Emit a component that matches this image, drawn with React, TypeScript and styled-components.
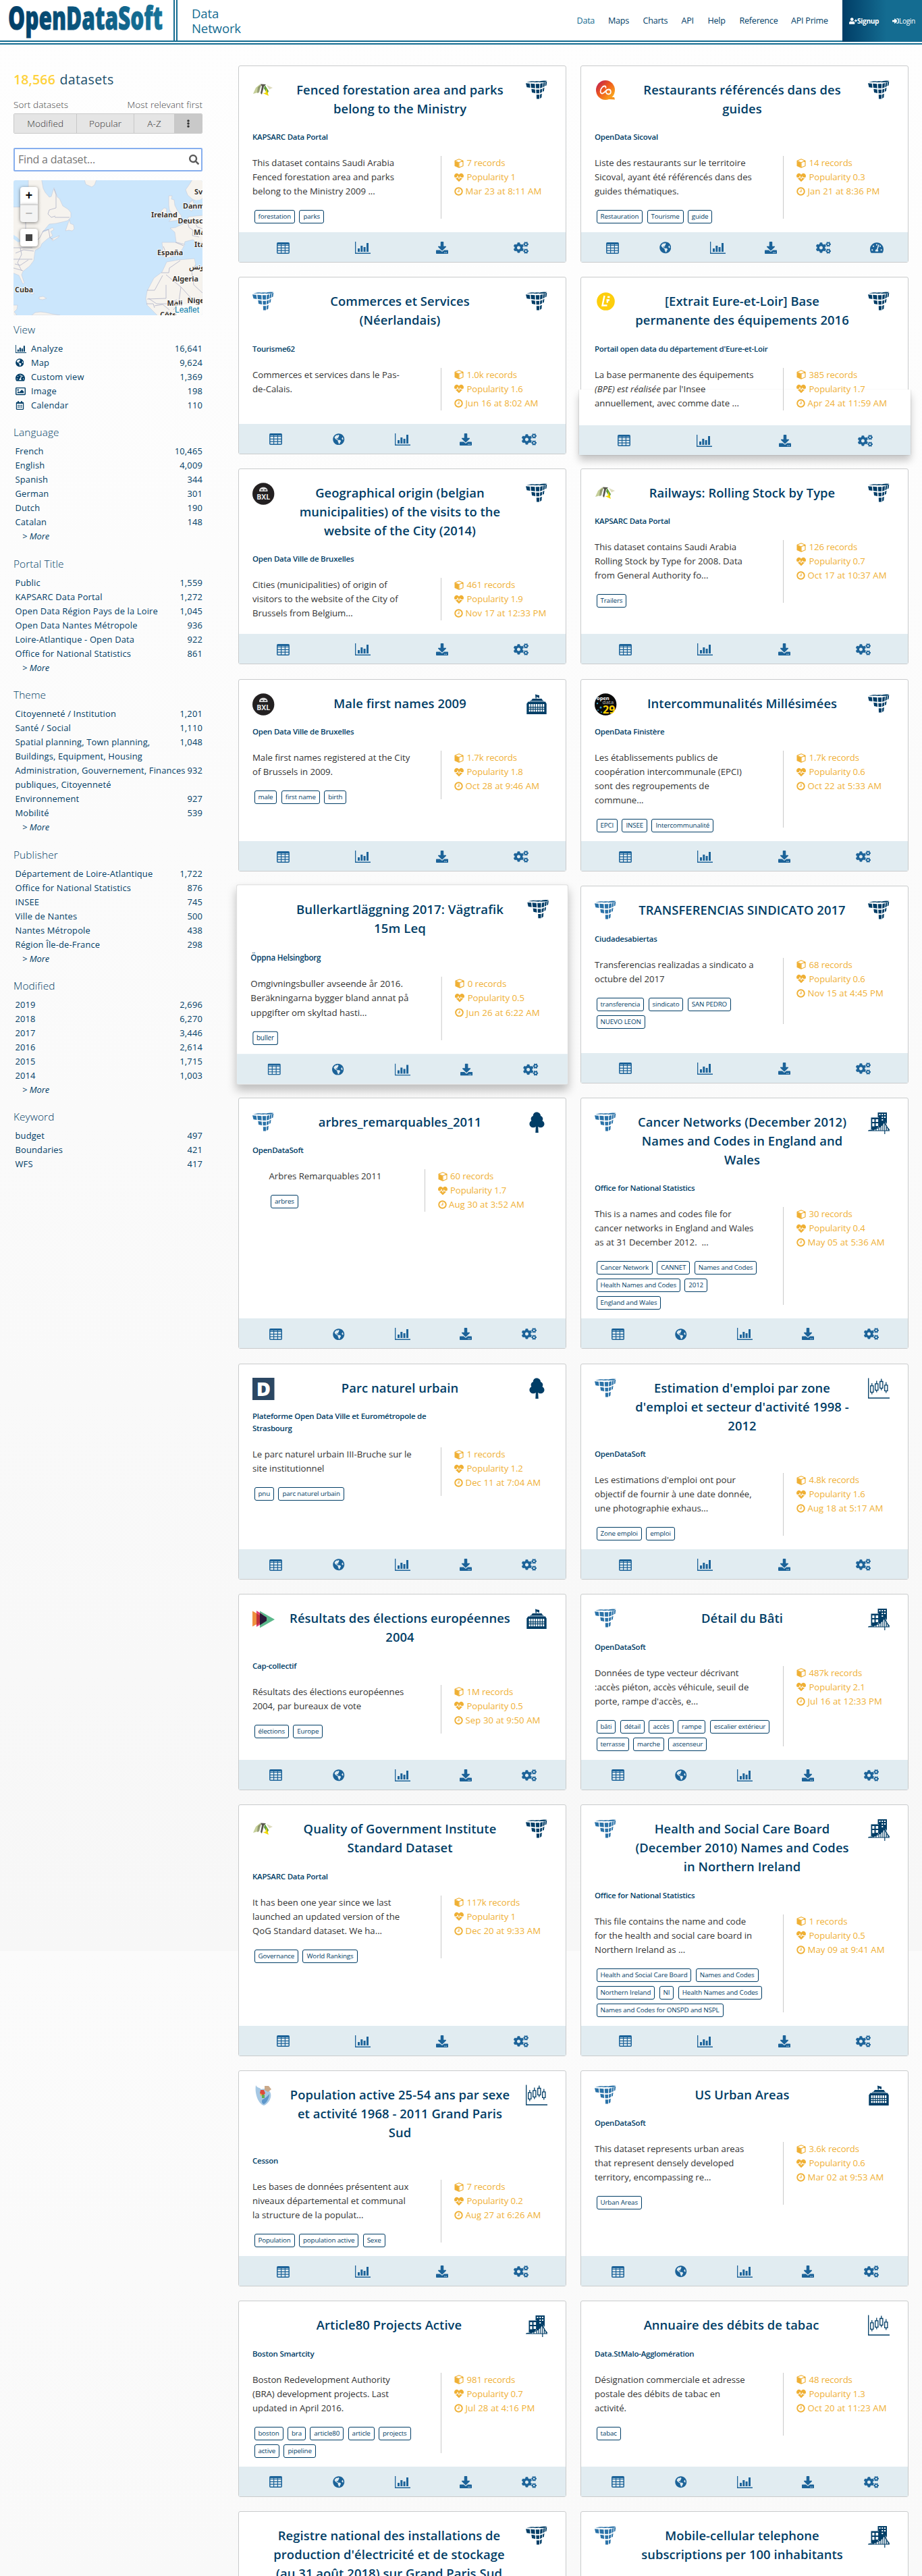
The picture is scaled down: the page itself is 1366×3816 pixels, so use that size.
import React from "react";
import styled, { createGlobalStyle } from "styled-components";
import {
  FaCogs,
  FaDownload,
  FaGlobeAmericas,
  FaHeartbeat,
  FaRegCalendarAlt,
  FaRegImage,
  FaSearch,
  FaSignInAlt,
  FaTachometerAlt,
  FaUserPlus,
  FaEllipsisV,
} from "react-icons/fa";

const navy = "#003d66";
const teal = "#146c91";
const amber = "#efb035";

const GlobalStyle = createGlobalStyle`
  * { box-sizing: border-box; }
  body {
    margin: 0;
    font-family: "Open Sans", "Noto Sans", sans-serif;
    color: #333;
    background: #fafafa;
  }
`;

const Page = styled.div`
  height: 3816px;
  overflow: hidden;
  background: linear-gradient(#fefefe 0, #f7f7f7 2890px, #fbfbfb 2890px, #f9f9f9 100%);
`;

/* ---------- header ---------- */

const Header = styled.header`
  height: 66px;
  display: flex;
  align-items: flex-start;
  background: linear-gradient(${teal}, ${teal}) 0 60px / 100% 2px no-repeat,
    linear-gradient(${teal}, ${teal}) 0 64px / 100% 2px no-repeat, #fff;
`;

const LogoCell = styled.div`
  width: 263px;
  height: 60px;
  border-right: 6px double ${teal};
  svg { display: block; }
`;

const Tagline = styled.div`
  margin: 9px 0 0 21px;
  font-size: 18.6px;
  line-height: 22px;
  letter-spacing: -0.15px;
  color: ${teal};
  flex: 1;
`;

const Nav = styled.nav`
  height: 60px;
  display: flex;
  align-items: center;
  gap: 20px;
  padding-right: 20px;
`;

const NavLink = styled.a<{ $w: number; $active?: boolean }>`
  width: ${(p) => p.$w}px;
  white-space: nowrap;
  font-size: 12.6px;
  letter-spacing: -0.25px;
  color: ${(p) => (p.$active ? teal : navy)};
`;

const Auth = styled.div`
  width: 118px;
  height: 62px;
  display: flex;
  align-items: center;
  padding: 0 10px;
  justify-content: space-between;
  background: linear-gradient(90deg, ${navy}, ${teal} 55%);
`;

const AuthLink = styled.a<{ $bold?: boolean }>`
  display: flex;
  align-items: center;
  color: #fff;
  font-size: 10.2px;
  letter-spacing: -0.35px;
  font-weight: ${(p) => (p.$bold ? 700 : 400)};
`;

/* ---------- layout ---------- */

const Main = styled.main`
  display: flex;
  padding: 30.5px 20px 0;
`;

const Sidebar = styled.aside`
  width: 280px;
  margin-right: 53px;
  flex: none;
`;

const Results = styled.section`
  flex: none;
  display: grid;
  grid-template-columns: 486px 486px;
  column-gap: 21px;
  row-gap: 21.2px;
`;

/* ---------- sidebar ---------- */

const Count = styled.h1`
  margin: 8px 0 0;
  font-size: 19.6px;
  line-height: 26px;
  font-weight: 500;
  letter-spacing: 0.35px;
  white-space: nowrap;
  color: #1b4f6b;
  b { color: #ffd23c; font-weight: 600; letter-spacing: 0.1px; margin-right: 1px; }
`;

const SortHead = styled.div`
  display: flex;
  justify-content: space-between;
  margin-top: 14px;
  font-size: 13.5px;
  line-height: 20px;
  letter-spacing: 0.1px;
  font-weight: 300;
  color: #444;
`;

const SortBar = styled.div`
  display: flex;
  height: 30px;
  margin-top: 3.5px;
  border: 1px solid #c8c8c8;
  border-radius: 2px;
  overflow: hidden;
`;

const SortButton = styled.div<{ $w: number; $active?: boolean }>`
  width: ${(p) => p.$w}px;
  display: flex;
  align-items: center;
  justify-content: center;
  font-size: 13.5px;
  font-weight: 300;
  letter-spacing: 0.1px;
  color: #333;
  background: ${(p) => (p.$active ? "#c9c9c9" : "#e5e5e5")};
  & + & { border-left: 1px solid #c8c8c8; }
`;

const SearchBox = styled.div`
  display: flex;
  align-items: center;
  justify-content: space-between;
  height: 35px;
  margin-top: 20.5px;
  padding: 0 3px 0 5px;
  border: 2px solid #86aeee;
  border-radius: 2px;
  background: #fff;
  font-size: 16px;
  letter-spacing: -0.2px;
  color: #777;
  svg { color: #5b5b5b; }
`;

const MapBox = styled.div`
  position: relative;
  height: 200px;
  margin-top: 13.5px;
  border-radius: 3px;
  overflow: hidden;
  svg { display: block; }
`;

const MapControls = styled.div`
  position: absolute;
  left: 10px;
  top: 10px;
  display: flex;
  flex-direction: column;
  width: 26px;
`;

const MapButton = styled.div<{ $edge?: "top" | "bottom" }>`
  height: 26px;
  display: flex;
  align-items: center;
  justify-content: center;
  background: ${(p) => (p.$edge === "bottom" ? "#f4f4f4" : "#fff")};
  color: ${(p) => (p.$edge === "bottom" ? "#bbb" : "#000")};
  border-top: ${(p) => (p.$edge === "bottom" ? "1px solid #ccc" : "0")};
  border-radius: ${(p) =>
    p.$edge === "top" ? "4px 4px 0 0" : p.$edge === "bottom" ? "0 0 4px 4px" : "4px"};
  margin-top: ${(p) => (p.$edge ? 0 : 10)}px;
  box-shadow: 0 1px 5px rgba(0, 0, 0, 0.5);
  font: bold 18px "Liberation Mono", monospace;
`;

const Square = styled.i`
  width: 10px;
  height: 10px;
  background: #444;
`;

const Attribution = styled.div`
  position: absolute;
  right: 0;
  bottom: 0;
  height: 16px;
  padding: 0 5px 0 0;
  background: rgba(255, 255, 255, 0.7);
  color: #0078a8;
  font: 12px/16px "Liberation Sans", Arial, sans-serif;
`;

const Facets = styled.div`
  margin-top: 8px;
`;

const Facet = styled.section`
  margin-bottom: 16.4px;
`;

const FacetTitle = styled.h2`
  margin: 0 0 3px;
  font-size: 15.4px;
  line-height: 28px;
  height: 28px;
  font-weight: 300;
  letter-spacing: 0.1px;
  color: ${navy};
`;

const FacetRow = styled.div`
  display: flex;
  justify-content: space-between;
  align-items: flex-start;
  padding-left: 2.5px;
  font-size: 12.9px;
  line-height: 21px;
  letter-spacing: 0.17px;
  color: ${navy};
  white-space: pre;
`;

const FacetLabel = styled.span`
  display: flex;
`;

const FacetIcon = styled.span`
  width: 23.5px;
  height: 21px;
  display: flex;
  align-items: center;
`;

const More = styled.div`
  padding-left: 13px;
  font-size: 12.9px;
  line-height: 21px;
  font-style: italic;
  color: ${navy};
`;

/* ---------- dataset card ---------- */

const CardBox = styled.article<{ $lift?: "all" | "bottom" }>`
  position: relative;
  display: flex;
  flex-direction: column;
  background: #fff;
  border: 1px solid #c9cbcc;
  border-radius: 3px;
  ${(p) =>
    p.$lift === "all"
      ? "transform: scale(1.012); box-shadow: 0 8px 14px rgba(0,0,0,.25); border-color: #ddd; z-index: 1;"
      : ""}
  ${(p) =>
    p.$lift === "bottom"
      ? `&::before {
        content: "";
        position: absolute;
        z-index: 0;
        left: -3px; right: -4px; bottom: -2px;
        height: 97px;
        background: #fff;
        border-radius: 0 0 3px 3px;
        box-shadow: 0 8px 12px rgba(0,0,0,.22), 0 0 2px rgba(0,0,0,.25);
        clip-path: inset(0 -20px -30px -20px);
      }
      & > * { position: relative; }
      & > footer { margin-left: -3px; margin-right: -4px; top: 2px; }`
      : ""}
`;

const CardHead = styled.header`
  display: flex;
  padding: 21px 27px 0 20px;
`;

const CardIcon = styled.div`
  width: 32px;
  height: 32px;
  margin: -1px 0 -4px;
  flex: none;
  svg { display: block; }
`;

const Title = styled.h2`
  flex: 1;
  margin: 0 -12px;
  font-size: 18.4px;
  line-height: 28px;
  font-weight: 600;
  letter-spacing: 0.07px;
  text-align: center;
  white-space: pre;
  color: ${navy};
`;

const Publisher = styled.div`
  padding: 19.5px 20px 19px;
  font-size: 11.5px;
  line-height: 18px;
  font-weight: 600;
  letter-spacing: -0.24px;
  color: ${navy};
  white-space: pre;
`;

const Body = styled.div<{ $inset?: boolean }>`
  display: flex;
  padding-left: ${(p) => (p.$inset ? 44.5 : 20)}px;
  margin-bottom: 20px;
`;

const Description = styled.div<{ $inset?: boolean }>`
  width: ${(p) => (p.$inset ? 230 : 279)}px;
  font-size: 13.2px;
  line-height: 21px;
  letter-spacing: -0.01px;
  color: #333;
  white-space: pre;
`;

const Tags = styled.div`
  padding: 17px 0 0 2.5px;
  margin-bottom: -7px;
  display: flex;
  flex-direction: column;
  gap: 6px;
`;

const TagRow = styled.div`
  display: flex;
  gap: 6.3px;
`;

const Tag = styled.span`
  height: 20px;
  padding: 0 5px;
  border: 1px solid ${navy};
  border-radius: 3px;
  font-size: 9.8px;
  line-height: 18px;
  letter-spacing: -0.14px;
  color: ${navy};
`;

const Meta = styled.div`
  min-height: 63px;
  border-left: 1px solid #c9c9c9;
  padding-left: 19px;
  font-size: 13.2px;
  line-height: 21px;
  white-space: nowrap;
  color: ${amber};
`;

const MetaRow = styled.div<{ $gap: number; $spacing?: number }>`
  display: flex;
  align-items: center;
  gap: ${(p) => p.$gap}px;
  height: 21px;
  letter-spacing: ${(p) => p.$spacing ?? -0.1}px;
`;

const Actions = styled.footer`
  display: flex;
  justify-content: space-around;
  align-items: center;
  height: 44px;
  margin-top: auto;
  padding: 2px 7px 0;
  background: #e1ecf1;
  color: #1c6399;
  span { width: 24px; display: flex; justify-content: center; }
`;

/* ---------- drawings ---------- */

const CubesIcon = ({ color = navy }: { color?: string }) => (
  <svg width="32" height="32" viewBox="0 0 32 32" fill={color}>
    <path d="M1 3.6 8 2.2l6 .1-5 1.5zM9.6 3.8 15 2.2l6 0-4 1.9zM18 4.1 22 2l5-.6 4.4.4-3 2zM0 5.2l5.8.5.7 6.3-5-.7zM7.2 5.8l6.2.4.3 6.5-5.8-.6zM14.8 6.2h5.4l-.2 6.6h-4.8zM21.4 6l3.6-.9-.5 6.4-3.4 1.2zM26 4.8l2.4-.8-.7 6-2.4 1.2zM29.3 3.6l2-.8-.8 5.6-1.9 1.2zM8.3 13.8l5.4.8.4 5.3-5-.8zM15.3 14.8h4.8l-.2 5.4h-4.3zM21.2 14.5l3.2-1.1-.5 5.2-2.9 1.3zM25.3 13l2.2-1.2-.6 4.9-2 1.2zM15.8 22.2h4.4l-.2 6.2h-4zM21.1 21.9l2.7-1.2-.4 5.6-2.4 1.600z" />
  </svg>
);

const TreeIcon = () => (
  <svg width="32" height="32" viewBox="0 0 32 32" fill={navy}>
    <path d="M16 .5c3.400 0 6 2.500 6 5.400 2 .8 3.300 2.500 3.300 4.600 0 1.100-.3 2-.9 2.800 1.900 1 3.100 2.600 3.100 4.700 0 3-2.600 5.300-5.700 5.300-1.500 0-2.500-.3-3.600-1.200L18.700 31h-4.400l.5-8.900c-1.200.9-2.200 1.200-3.700 1.200-3.100 0-5.700-2.300-5.700-5.300 0-2.100 1.100-3.700 3-4.700-.5-.8-.8-1.700-.8-2.800 0-2.100 1.300-3.900 3.200-4.600C10.800 3 12.800.5 16 .5z" />
  </svg>
);

const TownHallIcon = () => (
  <svg width="32" height="32" viewBox="0 0 32 32">
    <path fill={navy} d="M14 1.500l3 1 3 .5v4l-3-1-1-1.500v3h-1.500zM10 8h13.500l2 3.200H7.500z" />
    <path fill="#6d8fa8" d="M6 10.800h20.500v1.700H6z" />
    <path fill={navy} d="M3.500 12.500h25.500l1.700 3V31H1.300V15.500z" />
    <g fill="#fff">
      {[4.6, 8, 11.4, 14.8, 18.2, 21.6, 25].map((x) => (
        <React.Fragment key={x}>
          <rect x={x} y="16" width="2.300" height="4" />
          <rect x={x} y="21.300" width="2.300" height="1.600" />
          <rect x={x} y="24.200" width="2.300" height="3" />
        </React.Fragment>
      ))}
    </g>
  </svg>
);

const BridgeIcon = () => (
  <svg width="32" height="34" viewBox="0 0 32 34">
    <path fill={navy} d="M14.500 1H28v17l-3-4-3 4.500-6 6V8h-1.500zM4.500 8.500h13V20l-6 6h-7z" />
    <path
      fill="#fff"
      d="M16.500 3h2v2h-2zM20.300 3h2v2h-2zM24 3h2v2h-2zM20.300 7h2v2h-2zM24 7h2v2h-2zM20.300 11h2v2h-2zM6.300 11h3.200v4H6.300zM11.500 11h3.600v4h-3.600zM6.300 17h3.200v4.500H6.300zM11.500 17h3.600v4h-3.600z"
    />
    <path fill="#fff" d="M12 26q9-3 12.500-12.500Q27 20 31 25v3H12z" />
    <path
      fill="none"
      stroke={navy}
      strokeWidth="1.200"
      d="M0 28h32M24.800 13v20M1 27.500Q19 26 24.800 14Q27 23 32 27M8 26v2M12 25v3M16 23V28M19 21v7M22 18.500V28M27.500 20v8M30 24v4"
    />
  </svg>
);

const CandlesIcon = () => (
  <svg width="32" height="32" viewBox="0 0 32 32" fill="none" stroke={navy}>
    <path strokeWidth="1.300" d="M.7.5v29.500H32" />
    <path
      strokeWidth="1.300"
      d="M3.700 11.800h4.200v9.500H3.700zM10.700 8.800h4.200v9.500h-4.200zM17.700 5.500h4.200v9.800h-4.200zM24.700 10.800h4.200v8.500h-4.200zM5.800 8v4M5.800 21v3.500M12.800 4.500v4M12.800 18v3.500M19.800 1.500v4M19.800 15v3.500M26.800 6.500v4M26.800 19v3.500"
    />
  </svg>
);

const KapsarcLogo = () => (
  <svg width="32" height="32" viewBox="0 0 32 32">
    <path fill="#c5cf9a" d="M11 7 5 12 1 21l7-2 5-11z" />
    <path fill="#7a8358" d="M8 11l5-4-3 12-3 1z" opacity=".7" />
    <path fill="#57564c" d="M12 6.500l8 .5-3 3-3 12-2-2 2-10z" />
    <path fill="#5d9b3c" d="M18.500 8l5.500 9-2 4-5-8z" />
    <path fill="#f2d800" d="M20.500 13l3.500 11-8.500-4 4-.5z" />
    <path fill="#d6d3ad" d="M21 8l9 4-5 2.500z" opacity=".8" />
  </svg>
);

const SicovalLogo = () => (
  <svg width="32" height="32" viewBox="0 0 32 32">
    <defs>
      <linearGradient id="sicoval" x1="0" y1="0" x2="1" y2="1">
        <stop offset="0" stopColor="#b8165a" />
        <stop offset=".45" stopColor="#ee5a1e" />
        <stop offset="1" stopColor="#ffc21a" />
      </linearGradient>
    </defs>
    <ellipse cx="16" cy="15.500" rx="14" ry="14.500" fill="url(#sicoval)" />
    <path fill="#f6931e" d="M22 26h7l1 3.500-9-.5z" />
    <path
      fill="none"
      stroke="#fff"
      strokeWidth="1.800"
      strokeLinecap="round"
      d="M16.500 12c.5-3-3-3.500-5.500-.5-3.500 4-3 9.500.5 9 3.500-.5 5-6 9-6 4.500 0 4.500 7 0 7-3.500 0-4.500-3.500-3-6"
    />
  </svg>
);

const EureLogo = () => (
  <svg width="32" height="32" viewBox="0 0 32 32">
    <circle cx="16.500" cy="15.500" r="13.300" fill="#fdce0c" />
    <path fill="none" stroke="#fff" strokeWidth="2.400" d="M14.500 7 11.500 21.500h7M19.500 13.500l-1 4M17.500 13.500h4.500M19 9h3.500" />
  </svg>
);

const BxlLogo = () => (
  <svg width="33" height="33" viewBox="0 0 33 33">
    <circle cx="16.200" cy="16.500" r="16.200" fill="#232021" />
    <path fill="#ddd" d="M10 12c0-7 12.500-7 12.500 0v1H10z" />
    <path fill="#232021" d="M12.500 10h3v1.500h-3zM17.500 10h3v1.500h-3z" />
    <text x="16.200" y="24.500" textAnchor="middle" fontSize="10.500" fontWeight="700" fill="#e8e8e8">
      BXL
    </text>
  </svg>
);

const FinistereLogo = () => (
  <svg width="33" height="33" viewBox="0 0 33 33">
    <circle cx="16.200" cy="16.500" r="16.200" fill="#0b0b0b" />
    <text x="3" y="10" fontSize="7.500" fontWeight="700" fill="#fff">
      open
    </text>
    <text x="11.500" y="16" fontSize="8" fill="#bbb">
      data
    </text>
    <text x="12" y="30" fontSize="16" fontWeight="700" fill="#ffd200">
      29
    </text>
    <g fill="#3aa0c8">
      <circle cx="4" cy="15" r="1.200" />
      <circle cx="9" cy="21" r="1.500" />
      <circle cx="5" cy="25" r="1" />
      <circle cx="10" cy="28" r="1" />
    </g>
  </svg>
);

const StrasbourgLogo = () => (
  <svg width="33" height="33" viewBox="0 0 33 33">
    <rect width="32.500" height="33" fill="#2b4763" />
    <text x="16.500" y="27" textAnchor="middle" fontSize="29" fontWeight="800" fill="#fff">
      D
    </text>
  </svg>
);

const CapLogo = () => (
  <svg width="33" height="32" viewBox="0 0 33 32">
    <path fill="#5bb98c" d="M11 4.500 33 17 11 29.500z" />
    <path fill="#e0407b" d="M6 4l9 5.500v13L6 28z" />
    <path fill="#ef8f40" d="M0 4.500 10 10v12L0 27.500z" />
    <path fill="#2a1838" d="M11 7.500 21 14v5l-10 6.500z" />
    <path fill="#c0303a" d="M6 8l5 3v11l-5 4z" />
  </svg>
);

const CessonLogo = () => (
  <svg width="32" height="32" viewBox="0 0 32 32">
    <path fill="#a6c8e4" d="M5 1c2 4 5 3 8 6 5-2 12 0 14 6 2 7-4 16-10 18C9 29 3 14 5 1z" />
    <path fill="#5d97cb" d="M15 22c4-1 8-6 10-8 0 6-4 13-8 15-3-1-4-4-2-7z" />
    <path fill="#caa98a" d="m18 2 6 0 4 5-5 4-5-3z" />
    <path fill="#dd4a3c" d="M12 8h5l2 5-4 4-4-4z" />
    <path fill="#5fae54" d="m14 15 4 0v5l-4 0z" />
    <path fill="#e8b33a" d="m11 13 3 1-1 4z" />
  </svg>
);

const TableIcon = () => (
  <svg width="19" height="17" viewBox="0 0 19 17">
    <rect x=".8" y=".8" width="17.400" height="15.400" rx="1" fill="none" stroke="currentColor" strokeWidth="1.500" />
    <path fill="none" stroke="currentColor" strokeWidth="1.200" d="M1 4.300h17M1 8.300h17M1 12.200h17M6.600 3v13M12.400 3v13" />
    <path stroke="currentColor" strokeWidth="2" d="M1 2h17" />
  </svg>
);

const ChartIcon = ({ w = 23, h = 18 }: { w?: number; h?: number }) => (
  <svg width={w} height={h} viewBox="0 0 23 18" preserveAspectRatio="none">
    <path fill="currentColor" d="M0 0h1.300v16.500H23V18H0zM4 10h3v5H4zM8.300 6h3v9h-3zM12.600 8h3v7h-3zM17 2h3v13h-3z" />
  </svg>
);

const CubeIcon = () => (
  <svg width="14" height="14" viewBox="0 0 14 14">
    <path fill={amber} d="M.5 3.500 6.700 6v7.800L.5 11z" />
    <path fill="none" stroke={amber} strokeWidth="1.200" strokeLinejoin="round" d="M1 3.200 7 .8l6 2.400v7.600l-6 2.500V6zM13 3.200 7 5.800" />
  </svg>
);

const ClockIcon = () => (
  <svg width="13" height="13" viewBox="0 0 13 13" fill="none" stroke={amber}>
    <circle cx="6.500" cy="6.500" r="5.300" strokeWidth="1.900" />
    <path strokeWidth="1.200" d="M7 3.500V7H4.500" />
  </svg>
);

const MapDrawing = () => (
  <svg width="280" height="200" viewBox="0 0 280 200">
    <rect width="280" height="200" fill="#cbe6fc" />
    <g fill="#f6f3ee" stroke="#c3cbdc" strokeWidth=".6">
      <path d="M-1 39.700H10V30l12-10V-1h19.700L44 12l3 6 6 7 3-1 4-13 5 14 3 2 5 11 8 5 4 5v7l-5 5-17 4-10 1-10 12 5-2 10-5 2 3-5 3 3 6-8 5-8 7-2 5-8 5-2 15-6 8-10 8-2 5 4 12-2 2-6-13-7-3H-1z" />
      <path d="M78 72l2-6 3-8 1 6 5 2 1 6-3 3-5-1-5 1zM56 87l12-5-2 3-8 5zM105-1l2 7 9 4 4-3 3-8zM18 162l6 1 7 5-4 1zM38 173l6-1 5 3-6 2-5-1zM-1 185l7 0-1 6-4 4 4 5h-6zM27 200l5-4 8-1 8 1 9 2 12 2z" />
      <path d="M230 23l5 0-1 5 4 1 1 8 4 8 6 8-2 6-9 1-8 1 4-4-2-3 3-4-4-6-1-7zM219 45l4-4 4 1-1 9-8 4-2-2z" />
      <path d="M281-1v27l-7 6-9-4-7-6-3-8 5-7 5-8zM281 34v100l-11-9-2-9-24 2-17 3-7 15-12 9-10 19-2 11 2 10 16 16 6 9h60zM262 34l2-5 4 3z" />
    </g>
    <path fill="#cbe6fc" d="M254 95l7-5 8-1 12 5v37l-13-2 3-5-3-9-24 2-13 2-2-4 14-4 8-10 1-5zM281 42l-11 3-9 4-3-6 2-9 8-4 13-2zM0 81l5 3 6 6-4 2-7-5z" />
    <path
      fill="#f6f3ee"
      stroke="#c3cbdc"
      strokeWidth=".6"
      d="M220 92l22 0 12 3-4 7-7 9-15 4-8-3 1-11zM232 71l8-1 6-3 11-5 2-8 22-2v40l-9 1-6-5-12 3-1 4-12-3-2-15zM261 33l5-3 2 8-4 8-4-3z"
    />
    <path
      fill="none"
      stroke="#aeb1c6"
      strokeWidth=".8"
      d="M60 13l3 8 0 20-10 3-2 6 5 5 6-2M61 55h22M18 62v10M31 93l8-8 5-10 8-2 2 12 5 3M0 100h28M3 108l12-5 15 2M0 117h28M2 124l8 2 12-8M0 130l14 4M10 100l2 10-6 12 6 12M24 96l8-4 4 0M219 137h11l1-7 16-11M198 163h11l12-22M226 140l22 18 18 20M226 155v20l-28 1M200 175l12 8h18l12-6M209 186l12-2 10 8M270 125l-6 10 3 20 13 12M248 158l-3 22-8 12M240 92l12 5M222 98l4 10M258 62l2 8 6 4-1 8 10 2M268 60l4 9 8 3M197 183l10 0 2 6"
    />
    <g fontFamily='"Noto Sans", sans-serif' fontWeight="700" fontSize="10.800" fill="#3a352f" stroke="#fff" strokeWidth="1.600" paintOrder="stroke">
      <text x="268" y="21">Sv</text>
      <text x="251" y="42">Danm</text>
      <text x="204" y="55">Ireland</text>
      <text x="243.500" y="63.500">Deutsch</text>
      <text x="267" y="80.500">Ma</text>
      <text x="268" y="98.500">Ita</text>
      <text x="213" y="111">España</text>
      <text x="260" y="132">تونس</text>
      <text x="235.500" y="150">Algeria</text>
      <text x="2" y="166">Cuba</text>
      <text x="227.500" y="186">Mali</text>
      <text x="257.500" y="182">Nige</text>
      <text x="217" y="203">Côte</text>
    </g>
  </svg>
);

const Logo = () => (
  <svg width="257" height="60" viewBox="0 0 257 60">
    <defs>
      <linearGradient id="brand" x1="0" y1="0" x2="1" y2="0">
        <stop offset="0" stopColor={navy} />
        <stop offset="1" stopColor="#17749a" />
      </linearGradient>
    </defs>
    <text
      x="12"
      y="43.500"
      fontFamily='"Open Sans", sans-serif'
      fontWeight="800"
      fontSize="48"
      textLength="229"
      lengthAdjust="spacingAndGlyphs"
      fill="url(#brand)"
      stroke="url(#brand)"
      strokeWidth=".9"
    >
      OpenDataSoft
    </text>
  </svg>
);

/* ---------- data ---------- */

type IconName =
  | "cubes" | "cubesBlue" | "tree" | "hall" | "bridge" | "candles" | "kapsarc" | "sicoval"
  | "eure" | "bxl" | "finistere" | "strasbourg" | "cap" | "cesson" | "blank";

const icons: Record<IconName, React.ReactNode> = {
  cubes: <CubesIcon />,
  cubesBlue: <CubesIcon color="#2a72a8" />,
  tree: <TreeIcon />,
  hall: <TownHallIcon />,
  bridge: <BridgeIcon />,
  candles: <CandlesIcon />,
  kapsarc: <KapsarcLogo />,
  sicoval: <SicovalLogo />,
  eure: <EureLogo />,
  bxl: <BxlLogo />,
  finistere: <FinistereLogo />,
  strasbourg: <StrasbourgLogo />,
  cap: <CapLogo />,
  cesson: <CessonLogo />,
  blank: null,
};

const actionIcons: Record<string, React.ReactNode> = {
  t: <TableIcon />,
  g: <FaGlobeAmericas size={17.500} />,
  c: <ChartIcon />,
  d: <FaDownload size={18} />,
  a: <FaCogs size={22} />,
  v: <FaTachometerAlt size={20} />,
};

interface Dataset {
  logo?: IconName;
  title: string;
  theme: IconName;
  publisher: string;
  text: React.ReactNode;
  tags?: string[][];
  records?: string;
  popularity?: string;
  date?: string;
  actions: string;
  lift?: "all" | "bottom";
  inset?: boolean;
}

const datasets: Dataset[] = [
  { logo: "kapsarc", title: "Fenced forestation area and parks\nbelong to the Ministry", theme: "cubes", publisher: "KAPSARC Data Portal", text: "This dataset contains Saudi Arabia\nFenced forestation area and parks\nbelong to the Ministry 2009 ...", tags: [["forestation", "parks"]], records: "7", popularity: "1", date: "Mar 23 at 8:11 AM", actions: "tcda" },
  { logo: "sicoval", title: "Restaurants référencés dans des\nguides", theme: "cubes", publisher: "OpenData Sicoval", text: "Liste des restaurants sur le territoire\nSicoval, ayant été référencés dans des\nguides thématiques.", tags: [["Restauration", "Tourisme", "guide"]], records: "14", popularity: "0.3", date: "Jan 21 at 8:36 PM", actions: "tgcdav" },
  { logo: "cubesBlue", title: "Commerces et Services\n(Néerlandais)", theme: "cubes", publisher: "Tourisme62", text: "Commerces et services dans le Pas-\nde-Calais.", records: "1.0k", popularity: "1.6", date: "Jun 16 at 8:02 AM", actions: "tgcda" },
  { logo: "eure", title: "[Extrait Eure-et-Loir] Base\npermanente des équipements 2016", theme: "cubes", publisher: "Portail open data du département d'Eure-et-Loir", text: <>{"La base permanente des équipements\n"}<i>(BPE) est réalisée</i>{" par l'Insee\nannuellement, avec comme date ..."}</>, records: "385", popularity: "1.7", date: "Apr 24 at 11:59 AM", actions: "tcda", lift: "bottom" },
  { logo: "bxl", title: "Geographical origin (belgian\nmunicipalities) of the visits to the\nwebsite of the City (2014)", theme: "cubes", publisher: "Open Data Ville de Bruxelles", text: "Cities (municipalities) of origin of\nvisitors to the website of the City of\nBrussels from Belgium...", records: "461", popularity: "1.9", date: "Nov 17 at 12:33 PM", actions: "tcda" },
  { logo: "kapsarc", title: "Railways: Rolling Stock by Type", theme: "cubes", publisher: "KAPSARC Data Portal", text: "This dataset contains Saudi Arabia\nRolling Stock by Type for 2008. Data\nfrom General Authority fo...", tags: [["Trailers"]], records: "126", popularity: "0.7", date: "Oct 17 at 10:37 AM", actions: "tcda" },
  { logo: "bxl", title: "Male first names 2009", theme: "hall", publisher: "Open Data Ville de Bruxelles", text: "Male first names registered at the City\nof Brussels in 2009.", tags: [["male", "first name", "birth"]], records: "1.7k", popularity: "1.8", date: "Oct 28 at 9:46 AM", actions: "tcda" },
  { logo: "finistere", title: "Intercommunalités Millésimées", theme: "cubes", publisher: "OpenData Finistère", text: "Les établissements publics de\ncoopération intercommunale (EPCI)\nsont des regroupements de\ncommune...", tags: [["EPCI", "INSEE", "Intercommunalité"]], records: "1.7k", popularity: "0.6", date: "Oct 22 at 5:33 AM", actions: "tcda" },
  { logo: "blank", title: "Bullerkartläggning 2017: Vägtrafik\n15m Leq", theme: "cubes", publisher: "Öppna Helsingborg", text: "Omgivningsbuller avseende år 2016.\nBeräkningarna bygger bland annat på\nuppgifter om skyltad hasti...", tags: [["buller"]], records: "0", popularity: "0.5", date: "Jun 26 at 6:22 AM", actions: "tgcda", lift: "all" },
  { logo: "cubesBlue", title: "TRANSFERENCIAS SINDICATO 2017", theme: "cubes", publisher: "Ciudadesabiertas", text: "Transferencias realizadas a sindicato a\noctubre del 2017", tags: [["transferencia", "sindicato", "SAN PEDRO"], ["NUEVO LEON"]], records: "68", popularity: "0.6", date: "Nov 15 at 4:45 PM", actions: "tcda" },
  { logo: "cubesBlue", title: "arbres_remarquables_2011", theme: "tree", publisher: "OpenDataSoft", text: "Arbres Remarquables 2011", tags: [["arbres"]], records: "60", popularity: "1.7", date: "Aug 30 at 3:52 AM", actions: "tgcda", inset: true },
  { logo: "cubesBlue", title: "Cancer Networks (December 2012)\nNames and Codes in England and\nWales", theme: "bridge", publisher: "Office for National Statistics", text: "This is a names and codes file for\ncancer networks in England and Wales\nas at 31 December 2012.  ...", tags: [["Cancer Network", "CANNET", "Names and Codes"], ["Health Names and Codes", "2012"], ["England and Wales"]], records: "30", popularity: "0.4", date: "May 05 at 5:36 AM", actions: "tgcda" },
  { logo: "strasbourg", title: "Parc naturel urbain", theme: "tree", publisher: "Plateforme Open Data Ville et Eurométropole de\nStrasbourg", text: "Le parc naturel urbain III-Bruche sur le\nsite institutionnel", tags: [["pnu", "parc naturel urbain"]], records: "1", popularity: "1.2", date: "Dec 11 at 7:04 AM", actions: "tgcda" },
  { logo: "cubesBlue", title: "Estimation d'emploi par zone\nd'emploi et secteur d'activité 1998 -\n2012", theme: "candles", publisher: "OpenDataSoft", text: "Les estimations d'emploi ont pour\nobjectif de fournir à une date donnée,\nune photographie exhaus...", tags: [["Zone emploi", "emploi"]], records: "4.8k", popularity: "1.6", date: "Aug 18 at 5:17 AM", actions: "tcda" },
  { logo: "cap", title: "Résultats des élections européennes\n2004", theme: "hall", publisher: "Cap-collectif", text: "Résultats des élections européennes\n2004, par bureaux de vote", tags: [["élections", "Europe"]], records: "1M", popularity: "0.5", date: "Sep 30 at 9:50 AM", actions: "tgcda" },
  { logo: "cubesBlue", title: "Détail du Bâti", theme: "bridge", publisher: "OpenDataSoft", text: "Données de type vecteur décrivant\n:accès piéton, accès véhicule, seuil de\nporte, rampe d'accès, e...", tags: [["bâti", "détail", "accès", "rampe", "escalier extérieur"], ["terrasse", "marche", "ascenseur"]], records: "487k", popularity: "2.1", date: "Jul 16 at 12:33 PM", actions: "tgcda" },
  { logo: "kapsarc", title: "Quality of Government Institute\nStandard Dataset", theme: "cubes", publisher: "KAPSARC Data Portal", text: "It has been one year since we last\nlaunched an updated version of the\nQoG Standard dataset. We ha...", tags: [["Governance", "World Rankings"]], records: "117k", popularity: "1", date: "Dec 20 at 9:33 AM", actions: "tcda" },
  { logo: "cubesBlue", title: "Health and Social Care Board\n(December 2010) Names and Codes\nin Northern Ireland", theme: "bridge", publisher: "Office for National Statistics", text: "This file contains the name and code\nfor the health and social care board in\nNorthern Ireland as ...", tags: [["Health and Social Care Board", "Names and Codes"], ["Northern Ireland", "NI", "Health Names and Codes"], ["Names and Codes for ONSPD and NSPL"]], records: "1", popularity: "0.5", date: "May 09 at 9:41 AM", actions: "tcda" },
  { logo: "cesson", title: "Population active 25-54 ans par sexe\net activité 1968 - 2011 Grand Paris\nSud", theme: "candles", publisher: "Cesson", text: "Les bases de données présentent aux\nniveaux départemental et communal\nla structure de la populat...", tags: [["Population", "population active", "Sexe"]], records: "7", popularity: "0.2", date: "Aug 27 at 6:26 AM", actions: "tcda" },
  { logo: "cubesBlue", title: "US Urban Areas", theme: "hall", publisher: "OpenDataSoft", text: "This dataset represents urban areas\nthat represent densely developed\nterritory, encompassing re...", tags: [["Urban Areas"]], records: "3.6k", popularity: "0.6", date: "Mar 02 at 9:53 AM", actions: "tgcda" },
  { title: "Article80 Projects Active", theme: "bridge", publisher: "Boston Smartcity", text: "Boston Redevelopment Authority\n(BRA) development projects. Last\nupdated in April 2016.", tags: [["boston", "bra", "article80", "article", "projects"], ["active", "pipeline"]], records: "981", popularity: "0.7", date: "Jul 28 at 4:16 PM", actions: "tgcda" },
  { title: "Annuaire des débits de tabac", theme: "candles", publisher: "Data.StMalo-Agglomération", text: "Désignation commerciale et adresse\npostale des débits de tabac en\nactivité.", tags: [["tabac"]], records: "48", popularity: "1.3", date: "Oct 20 at 11:23 AM", actions: "tgcda" },
  { title: "Registre national des installations de\nproduction d'électricité et de stockage\n(au 31 août 2018) sur Grand Paris Sud", theme: "cubes", publisher: "", text: "", actions: "" },
  { logo: "cubesBlue", title: "Mobile-cellular telephone\nsubscriptions per 100 inhabitants", theme: "bridge", publisher: "", text: "", actions: "" },
];

type Row = [string, string, React.ReactNode?];

const facets: { title: string; rows: Row[]; more?: boolean }[] = [
  {
    title: "View",
    rows: [
      ["Analyze", "16,641", <ChartIcon w={16} h={12} />],
      ["Map", "9,624", <FaGlobeAmericas size={12.500} />],
      ["Custom view", "1,369", <FaTachometerAlt size={14} />],
      ["Image", "198", <FaRegImage size={15} />],
      ["Calendar", "110", <FaRegCalendarAlt size={13} />],
    ],
  },
  { title: "Language", more: true, rows: [["French", "10,465"], ["English", "4,009"], ["Spanish", "344"], ["German", "301"], ["Dutch", "190"], ["Catalan", "148"]] },
  { title: "Portal Title", more: true, rows: [["Public", "1,559"], ["KAPSARC Data Portal", "1,272"], ["Open Data Région Pays de la Loire", "1,045"], ["Open Data Nantes Métropole", "936"], ["Loire-Atlantique - Open Data", "922"], ["Office for National Statistics", "861"]] },
  { title: "Theme", more: true, rows: [["Citoyenneté / Institution", "1,201"], ["Santé / Social", "1,110"], ["Spatial planning, Town planning,\nBuildings, Equipment, Housing", "1,048"], ["Administration, Gouvernement, Finances\npubliques, Citoyenneté", "932"], ["Environnement", "927"], ["Mobilité", "539"]] },
  { title: "Publisher", more: true, rows: [["Département de Loire-Atlantique", "1,722"], ["Office for National Statistics", "876"], ["INSEE", "745"], ["Ville de Nantes", "500"], ["Nantes Métropole", "438"], ["Région Île-de-France", "298"]] },
  { title: "Modified", more: true, rows: [["2019", "2,696"], ["2018", "6,270"], ["2017", "3,446"], ["2016", "2,614"], ["2015", "1,715"], ["2014", "1,003"]] },
  { title: "Keyword", rows: [["budget", "497"], ["Boundaries", "421"], ["WFS", "417"]] },
];

const navItems: [string, number][] = [
  ["Data", 26.500], ["Maps", 31.500], ["Charts", 37], ["API", 19], ["Help", 27], ["Reference", 56.500], ["API Prime", 56],
];

/* ---------- components ---------- */

const DatasetCard = ({ data }: { data: Dataset }) => (
  <CardBox $lift={data.lift}>
    <CardHead>
      {data.logo && <CardIcon>{icons[data.logo]}</CardIcon>}
      <Title>{data.title}</Title>
      <CardIcon>{icons[data.theme]}</CardIcon>
    </CardHead>
    <Publisher>{data.publisher}</Publisher>
    {data.records && (
      <Body $inset={data.inset}>
        <Description $inset={data.inset}>
          {data.text}
          {data.tags && (
            <Tags>
              {data.tags.map((row, i) => (
                <TagRow key={i}>
                  {row.map((tag) => (
                    <Tag key={tag}>{tag}</Tag>
                  ))}
                </TagRow>
              ))}
            </Tags>
          )}
        </Description>
        <Meta>
          <MetaRow $gap={4.500}>
            <CubeIcon />
            {data.records} records
          </MetaRow>
          <MetaRow $gap={4.500}>
            <FaHeartbeat size={14} />
            Popularity {data.popularity}
          </MetaRow>
          <MetaRow $gap={3.500} $spacing={0.070}>
            <ClockIcon />
            {data.date}
          </MetaRow>
        </Meta>
      </Body>
    )}
    {data.actions && (
      <Actions>
        {data.actions.split("").map((key) => (
          <span key={key}>{actionIcons[key]}</span>
        ))}
      </Actions>
    )}
  </CardBox>
);

export default function App() {
  return (
    <Page>
      <GlobalStyle />
      <Header>
        <LogoCell>
          <Logo />
        </LogoCell>
        <Tagline>
          Data
          <br />
          Network
        </Tagline>
        <Nav>
          {navItems.map(([label, w], i) => (
            <NavLink key={label} $w={w} $active={i === 0}>
              {label}
            </NavLink>
          ))}
        </Nav>
        <Auth>
          <AuthLink $bold>
            <FaUserPlus size={12} />
            Signup
          </AuthLink>
          <AuthLink>
            <FaSignInAlt size={10} />
            Login
          </AuthLink>
        </Auth>
      </Header>
      <Main>
        <Sidebar>
          <Count>
            <b>18,566</b> datasets
          </Count>
          <SortHead>
            <span>Sort datasets</span>
            <span>Most relevant first</span>
          </SortHead>
          <SortBar>
            <SortButton $w={93}>Modified</SortButton>
            <SortButton $w={85}>Popular</SortButton>
            <SortButton $w={61}>A-Z</SortButton>
            <SortButton $w={41} $active>
              <FaEllipsisV size={12} />
            </SortButton>
          </SortBar>
          <SearchBox>
            Find a dataset...
            <FaSearch size={15} />
          </SearchBox>
          <MapBox>
            <MapDrawing />
            <MapControls>
              <MapButton $edge="top">+</MapButton>
              <MapButton $edge="bottom">−</MapButton>
              <MapButton>
                <Square />
              </MapButton>
            </MapControls>
            <Attribution>Leaflet</Attribution>
          </MapBox>
          <Facets>
            {facets.map((facet) => (
              <Facet key={facet.title}>
                <FacetTitle>{facet.title}</FacetTitle>
                {facet.rows.map(([label, count, icon]) => (
                  <FacetRow key={label}>
                    <FacetLabel>
                      {icon && <FacetIcon>{icon}</FacetIcon>}
                      {label}
                    </FacetLabel>
                    <span>{count}</span>
                  </FacetRow>
                ))}
                {facet.more && <More>&gt; More</More>}
              </Facet>
            ))}
          </Facets>
        </Sidebar>
        <Results>
          {datasets.map((data) => (
            <DatasetCard key={data.title} data={data} />
          ))}
        </Results>
      </Main>
    </Page>
  );
}
